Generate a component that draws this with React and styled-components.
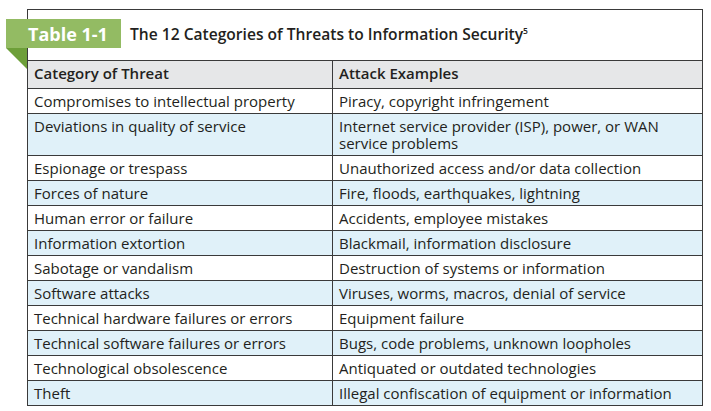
import React from "react";
import styled, { createGlobalStyle } from "styled-components";

const Global = createGlobalStyle`
  html, body { margin: 0; padding: 0; background: #fff; }
  body { font-family: "Open Sans", "Noto Sans", sans-serif; color: #231f20; }
`;

const Page = styled.div`
  padding: 9px 8px 0 27px;
  width: 676px;
`;

const Box = styled.div`
  position: relative;
  border: 1px solid #3a3a3a;
  background: #fff;
`;

const TitleRow = styled.div`
  display: flex;
  align-items: flex-start;
  height: 50px;
`;

const Tag = styled.div`
  position: relative;
  margin-left: -22px;
  margin-top: 9px;
  height: 29px;
  width: 115px;
  box-sizing: border-box;
  padding-left: 22px;
  display: flex;
  align-items: center;
  background: #93bb63;
  color: #fff;
  font-weight: 700;
  font-size: 18px;
  &::after {
    content: "";
    position: absolute;
    left: 0;
    top: 29px;
    width: 0;
    height: 0;
    border-top: 21px solid #6d9f39;
    border-left: 21px solid transparent;
  }
`;

const Title = styled.div`
  margin-left: 9px;
  margin-top: 13px;
  font-size: 15.6px;
  font-weight: 600;
  color: #231f20;
  sup {
    font-size: 8.5px;
    vertical-align: 6px;
    line-height: 0;
  }
`;

const Table = styled.table`
  width: 100%;
  border-collapse: collapse;
  table-layout: fixed;
`;

const Row = styled.tr`
  background: ${(p) => (p.$alt ? "#e0f1f9" : "#ffffff")};
`;

const HeadRow = styled.tr`
  background: #e6e7e8;
`;

const Cell = styled.td`
  border-top: 1px solid #3a3a3a;
  padding: 4px 6px 3px 6px;
  font-size: 15px;
  line-height: 17px;
  vertical-align: top;
  color: #231f20;
  &:first-child {
    width: 292px;
    border-right: 1px solid #3a3a3a;
  }
`;

const HeadCell = styled(Cell).attrs({ as: "th" })`
  text-align: left;
  font-weight: 600;
  font-size: 15px;
  padding: 4px 6px 6px 6px;
`;

const rows = [
  ["Compromises to intellectual property", "Piracy, copyright infringement"],
  ["Deviations in quality of service", "Internet service provider (ISP), power, or WAN service problems"],
  ["Espionage or trespass", "Unauthorized access and/or data collection"],
  ["Forces of nature", "Fire, floods, earthquakes, lightning"],
  ["Human error or failure", "Accidents, employee mistakes"],
  ["Information extortion", "Blackmail, information disclosure"],
  ["Sabotage or vandalism", "Destruction of systems or information"],
  ["Software attacks", "Viruses, worms, macros, denial of service"],
  ["Technical hardware failures or errors", "Equipment failure"],
  ["Technical software failures or errors", "Bugs, code problems, unknown loopholes"],
  ["Technological obsolescence", "Antiquated or outdated technologies"],
  ["Theft", "Illegal confiscation of equipment or information"],
];

export default function App() {
  return (
    <Page>
      <Global />
      <Box>
        <TitleRow>
          <Tag>Table 1-1</Tag>
          <Title>
            The 12 Categories of Threats to Information Security<sup>5</sup>
          </Title>
        </TitleRow>
        <Table>
          <thead>
            <HeadRow>
              <HeadCell>Category of Threat</HeadCell>
              <HeadCell>Attack Examples</HeadCell>
            </HeadRow>
          </thead>
          <tbody>
            {rows.map(([a, b], i) => (
              <Row key={a} $alt={i % 2 === 1}>
                <Cell>{a}</Cell>
                <Cell>{b}</Cell>
              </Row>
            ))}
          </tbody>
        </Table>
      </Box>
    </Page>
  );
}
